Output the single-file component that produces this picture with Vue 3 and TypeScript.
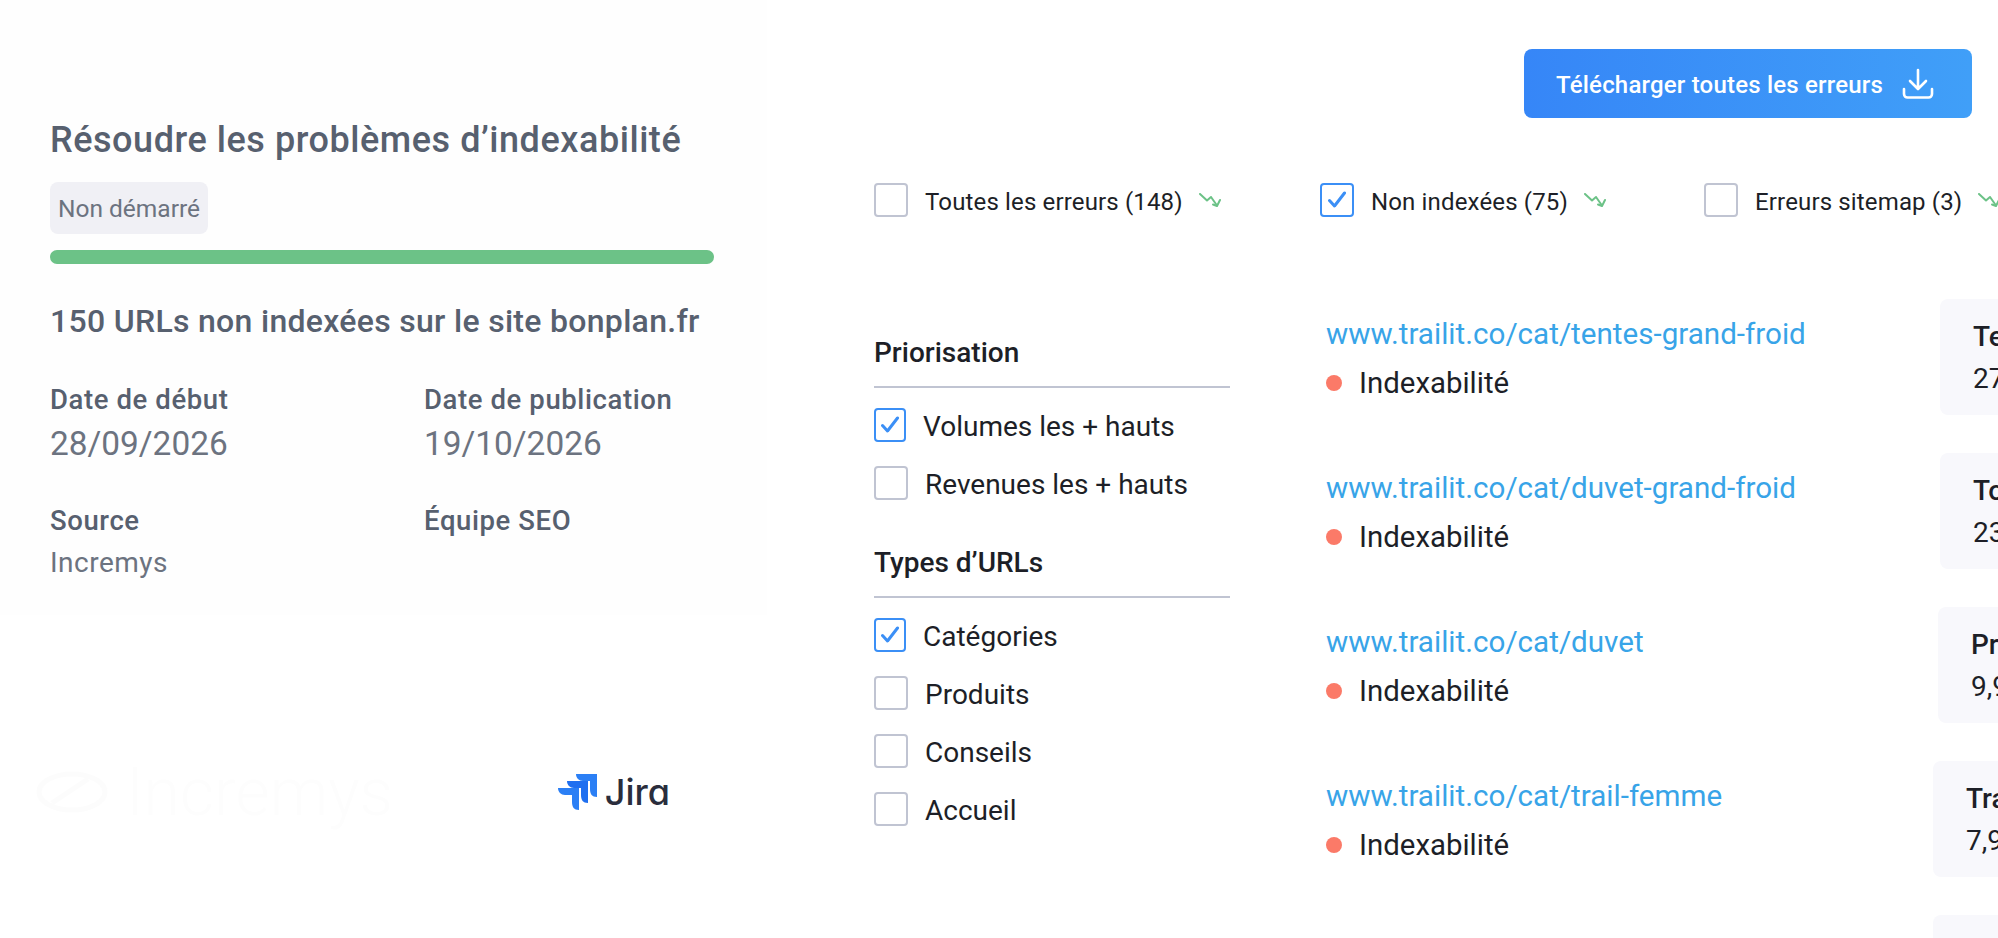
<script setup lang="ts">
interface Option { label: string; checked: boolean }
interface Row { url: string; metricTitle: string; metricValue: string; urlWidth: number }

const tabs = [
  { label: 'Toutes les erreurs (148)', checked: false, width: 446 },
  { label: 'Non indexées (75)', checked: true, width: 384 },
  { label: 'Erreurs sitemap (3)', checked: false, width: 300 },
]

const priorities: Option[] = [
  { label: 'Volumes les + hauts', checked: true },
  { label: 'Revenues les + hauts', checked: false },
]

const urlTypes: Option[] = [
  { label: 'Catégories', checked: true },
  { label: 'Produits', checked: false },
  { label: 'Conseils', checked: false },
  { label: 'Accueil', checked: false },
]

// la colonne de droite n'est pas tout à fait alignée dans la maquette
const rows: Row[] = [
  { url: 'www.trailit.co/cat/tentes-grand-froid', metricTitle: 'Te', metricValue: '27', urlWidth: 614 },
  { url: 'www.trailit.co/cat/duvet-grand-froid', metricTitle: 'To', metricValue: '23', urlWidth: 614 },
  { url: 'www.trailit.co/cat/duvet', metricTitle: 'Pr', metricValue: '9,9', urlWidth: 612 },
  { url: 'www.trailit.co/cat/trail-femme', metricTitle: 'Tra', metricValue: '7,9', urlWidth: 607 },
]
</script>

<template>
  <div class="page">
    <aside class="project">
      <div class="project-card">
        <h1>Résoudre les problèmes d’indexabilité</h1>
        <span class="badge">Non démarré</span>
        <div class="progress"></div>
        <h2>150 URLs non indexées sur le site bonplan.fr</h2>
        <div class="facts">
          <div>
            <div class="fact-label">Date de début</div>
            <div class="fact-value">28/09/2026</div>
          </div>
          <div>
            <div class="fact-label">Date de publication</div>
            <div class="fact-value">19/10/2026</div>
          </div>
          <div>
            <div class="fact-label">Source</div>
            <div class="fact-small">Incremys</div>
          </div>
          <div>
            <div class="fact-label">Équipe SEO</div>
          </div>
        </div>
      </div>
      <div class="logos">
        <div class="ghost-logo">
          <svg width="72" height="42" viewBox="0 0 72 42" fill="none">
            <ellipse cx="36" cy="21" rx="33" ry="18" stroke="#fcfcfc" stroke-width="5" />
            <path d="M16 32L52 8" stroke="#fcfcfc" stroke-width="5" />
          </svg>
          <span>Incremys</span>
        </div>
        <div class="jira">
          <svg width="40" height="36" viewBox="0 0 40 36">
            <path d="M18 0H39V23C34 23 32 20 32 15V7H25C21 7 18 4 18 0Z" fill="#2b7ff5" />
            <path d="M9 7H30V29C25 29 23 26 23 21V14H16C12 14 9 11 9 7Z" fill="#1f6ff0" />
            <path d="M0 14H21V36C16 36 14 33 14 28V21H7C3 21 0 18 0 14Z" fill="#2b7ff5" />
          </svg>
          <span>Jira</span>
        </div>
      </div>
    </aside>

    <main class="errors">
      <div class="toolbar">
        <button class="download" type="button">
          <span class="download-label">Télécharger toutes les erreurs</span>
          <svg width="32" height="32" viewBox="0 0 32 32" fill="none" stroke="#fff" stroke-width="2.6" stroke-linecap="round" stroke-linejoin="round">
            <path d="M16 2V20M8 13L16 21L24 13" />
            <path d="M2 21V26C2 28 3.5 29.5 5.5 29.5H26.5C28.5 29.5 30 28 30 26V21" />
          </svg>
        </button>
      </div>

      <div class="tabs">
        <label v-for="tab in tabs" :key="tab.label" class="tab" :style="{ width: tab.width + 'px' }">
          <span class="box" :class="{ checked: tab.checked }">
            <svg v-if="tab.checked" width="18" height="18" viewBox="0 0 18 18" fill="none">
              <path d="M1.5 9.5L6.5 15L16.5 2" stroke="#3b8ff6" stroke-width="3" stroke-linecap="round" stroke-linejoin="round" />
            </svg>
          </span>
          <span class="tab-label">{{ tab.label }}</span>
          <svg class="trend" width="22" height="14" viewBox="0 0 22 14" fill="none" stroke="#6cc287" stroke-width="2" stroke-linecap="round" stroke-linejoin="round">
            <path d="M1 1L8 7.5L12 4L18 12.5" />
            <path d="M14 11.5L18 13L21 7" />
          </svg>
        </label>
      </div>

      <div class="columns">
        <div class="filters">
          <h3>Priorisation</h3>
          <label v-for="opt in priorities" :key="opt.label" class="option">
            <span class="box" :class="{ checked: opt.checked }">
              <svg v-if="opt.checked" width="18" height="18" viewBox="0 0 18 18" fill="none">
                <path d="M1.5 9.5L6.5 15L16.5 2" stroke="#3b8ff6" stroke-width="3" stroke-linecap="round" stroke-linejoin="round" />
              </svg>
            </span>
            <span class="option-label">{{ opt.label }}</span>
          </label>

          <h3 class="second">Types d’URLs</h3>
          <label v-for="opt in urlTypes" :key="opt.label" class="option">
            <span class="box" :class="{ checked: opt.checked }">
              <svg v-if="opt.checked" width="18" height="18" viewBox="0 0 18 18" fill="none">
                <path d="M1.5 9.5L6.5 15L16.5 2" stroke="#3b8ff6" stroke-width="3" stroke-linecap="round" stroke-linejoin="round" />
              </svg>
            </span>
            <span class="option-label">{{ opt.label }}</span>
          </label>
        </div>

        <div class="rows">
          <div v-for="row in rows" :key="row.url" class="row">
            <div class="row-main" :style="{ width: row.urlWidth + 'px' }">
              <a class="url">{{ row.url }}</a>
              <div class="status"><i class="dot"></i>Indexabilité</div>
            </div>
            <div class="metric">
              <div class="metric-title">{{ row.metricTitle }}</div>
              <div class="metric-value">{{ row.metricValue }}</div>
            </div>
          </div>
          <!-- ligne coupée par le bas de l'écran -->
          <div class="row">
            <div class="row-main" :style="{ width: '607px' }">
              <a class="url">www.trailit.co/cat/trail-homme</a>
            </div>
            <div class="metric"></div>
          </div>
        </div>
      </div>
    </main>
  </div>
</template>

<style>
html, body {
  margin: 0;
  background: #ffffff;
}
</style>

<style scoped>
* {
  box-sizing: border-box;
}

.page {
  width: 1998px;
  height: 938px;
  overflow: hidden;
  display: flex;
  font-family: 'Roboto', 'Liberation Sans', sans-serif;
  color: #1d1f27;
}

.project {
  width: 874px;
  flex: none;
  padding-right: 107px;
}

.project-card {
  height: 615px;
  padding: 120px 0 0 50px;
  background: #fefefe;
}

h1 {
  margin: 0;
  font-size: 36px;
  line-height: 40px;
  font-weight: 500;
  letter-spacing: 0.55px;
  color: #57606f;
}

.badge {
  display: block;
  width: 158px;
  height: 52px;
  margin-top: 22px;
  border-radius: 8px;
  background: #f0f0f5;
  color: #6c7380;
  font-size: 24.5px;
  line-height: 54px;
  text-align: center;
}

.progress {
  width: 664px;
  height: 14px;
  margin-top: 16px;
  border-radius: 7px;
  background: #6cc287;
}

h2 {
  margin: 40px 0 0;
  font-size: 32px;
  line-height: 34px;
  font-weight: 500;
  letter-spacing: 0.3px;
  color: #57606f;
}

.facts {
  display: grid;
  grid-template-columns: 374px 1fr;
  row-gap: 47px;
  margin-top: 47px;
  color: #57606f;
}

.fact-label {
  font-size: 27.5px;
  line-height: 30px;
  font-weight: 500;
  letter-spacing: 0.6px;
}

.fact-value {
  margin-top: 14px;
  font-size: 33.4px;
  line-height: 30px;
  color: #6c7380;
}

.fact-small {
  margin-top: 12px;
  font-size: 28px;
  line-height: 30px;
  letter-spacing: 0.5px;
  color: #6c7380;
}

.logos {
  display: flex;
  align-items: center;
  justify-content: space-between;
  height: 100px;
  margin-top: 127px;
  padding: 0 97px 0 36px;
}

.ghost-logo {
  display: flex;
  align-items: center;
  gap: 18px;
  color: #fdfdfd;
  font-size: 66px;
  font-weight: 300;
}

.jira {
  display: flex;
  align-items: center;
  gap: 7px;
}

.jira span {
  font-family: 'Inter', sans-serif;
  font-feature-settings: 'cv11';
  font-size: 36px;
  font-weight: 500;
  color: #2a2d3c;
}

.errors {
  flex: 1;
  min-width: 0;
}

.toolbar {
  display: flex;
  justify-content: flex-end;
  padding: 49px 26px 0 0;
}

.download {
  display: flex;
  align-items: center;
  justify-content: space-between;
  width: 448px;
  height: 69px;
  padding: 0 38px 0 32px;
  border: none;
  border-radius: 8px;
  background: linear-gradient(90deg, #3686f7, #409ff8);
  color: #fff;
  font-family: inherit;
  font-size: 24px;
  font-weight: 500;
  letter-spacing: 0.2px;
}

.download-label {
  padding-top: 3px;
}

.tabs {
  display: flex;
  margin-top: 65px;
}

.tab {
  display: flex;
  align-items: center;
  flex: none;
}

.box {
  display: flex;
  align-items: center;
  justify-content: center;
  flex: none;
  width: 34px;
  height: 34px;
  border: 2px solid #c0c4d2;
  border-radius: 4px;
}

.box.checked {
  border-color: #3b8ff6;
}

.tab-label {
  margin-left: 17px;
  padding-top: 3px;
  font-size: 24px;
  letter-spacing: 0.15px;
}

.trend {
  flex: none;
  margin-left: 16px;
}

.columns {
  display: flex;
  margin-top: 82px;
}

.filters {
  width: 356px;
  flex: none;
  padding-top: 37px;
}

h3 {
  margin: 0;
  padding-bottom: 17px;
  border-bottom: 2px solid #c0c4d2;
  font-size: 28px;
  line-height: 33px;
  font-weight: 500;
}

h3.second {
  margin-top: 46px;
}

.option {
  display: flex;
  align-items: center;
  gap: 17px;
  height: 34px;
  margin-top: 24px;
  font-size: 28px;
}

.option-label {
  padding-top: 3px;
}

.option .box.checked {
  width: 32px;
}

h3 + .option {
  margin-top: 20px;
}

.rows {
  flex: 1;
  min-width: 0;
  margin-left: 96px;
}

.row {
  display: flex;
  height: 154px;
}

.row-main {
  flex: none;
  padding-top: 15px;
}

.url {
  display: block;
  color: #38a4e8;
  font-size: 29.6px;
  line-height: 40px;
  white-space: nowrap;
}

.status {
  display: flex;
  align-items: center;
  margin-top: 9px;
  font-size: 29.4px;
  line-height: 40px;
}

.dot {
  width: 16px;
  height: 16px;
  margin-right: 17px;
  border-radius: 50%;
  background: #fb7a68;
}

.metric {
  flex: 1;
  height: 116px;
  padding: 20px 0 0 33px;
  border-radius: 8px 0 0 8px;
  background: #f8f8fc;
  white-space: nowrap;
}

.metric-title {
  font-size: 28px;
  line-height: 36px;
  font-weight: 500;
}

.metric-value {
  margin-top: 6px;
  font-size: 28px;
  line-height: 36px;
}
</style>
